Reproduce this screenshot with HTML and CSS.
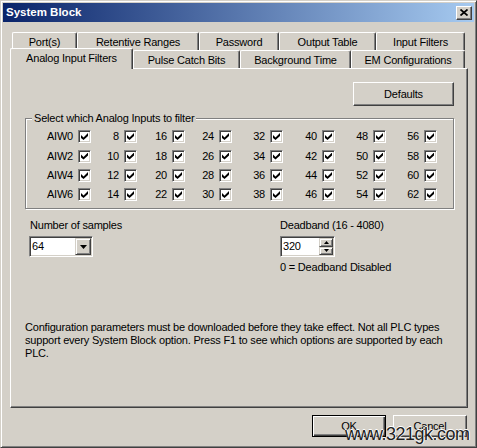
FILE: index.html
```html
<!DOCTYPE html>
<html lang="en">
  <head>
    <meta charset="UTF-8" />
    <title>System Block</title>
    <link rel="stylesheet" href="styles.css">
  </head>
  <body>
    <div class="window">
      <div class="titlebar">
        <span class="title">System Block</span>
        <span class="close">
          <svg width="8" height="7" viewBox="0 0 8 7"><path d="M0.5 0.5L7.5 6.5M7.5 0.5L0.5 6.5" stroke="#000" stroke-width="1.7" /></svg>
        </span>
      </div>

      <div class="client">
        <div class="tab-row back">
          <div class="tab tab-ports">Port(s)</div>
          <div class="tab tab-retentive">Retentive Ranges</div>
          <div class="tab tab-password">Password</div>
          <div class="tab tab-output">Output Table</div>
          <div class="tab tab-filters">Input Filters</div>
        </div>
        <div class="tab-row front">
          <div class="tab tab-analog active">Analog Input Filters</div>
          <div class="tab tab-pulse">Pulse Catch Bits</div>
          <div class="tab tab-background">Background Time</div>
          <div class="tab tab-em">EM Configurations</div>
        </div>

        <div class="panel">
          <div class="panel-head">
            <button class="btn defaults">Defaults</button>
          </div>

          <fieldset class="group">
            <legend>Select which Analog Inputs to filter</legend>
            <div class="inputs">
              <div class="cell"><span>AIW0</span><span class="chk"></span></div>
              <div class="cell"><span>8</span><span class="chk"></span></div>
              <div class="cell"><span>16</span><span class="chk"></span></div>
              <div class="cell"><span>24</span><span class="chk"></span></div>
              <div class="cell"><span>32</span><span class="chk"></span></div>
              <div class="cell"><span>40</span><span class="chk"></span></div>
              <div class="cell"><span>48</span><span class="chk"></span></div>
              <div class="cell"><span>56</span><span class="chk"></span></div>

              <div class="cell"><span>AIW2</span><span class="chk"></span></div>
              <div class="cell"><span>10</span><span class="chk"></span></div>
              <div class="cell"><span>18</span><span class="chk"></span></div>
              <div class="cell"><span>26</span><span class="chk"></span></div>
              <div class="cell"><span>34</span><span class="chk"></span></div>
              <div class="cell"><span>42</span><span class="chk"></span></div>
              <div class="cell"><span>50</span><span class="chk"></span></div>
              <div class="cell"><span>58</span><span class="chk"></span></div>

              <div class="cell"><span>AIW4</span><span class="chk"></span></div>
              <div class="cell"><span>12</span><span class="chk"></span></div>
              <div class="cell"><span>20</span><span class="chk"></span></div>
              <div class="cell"><span>28</span><span class="chk"></span></div>
              <div class="cell"><span>36</span><span class="chk"></span></div>
              <div class="cell"><span>44</span><span class="chk"></span></div>
              <div class="cell"><span>52</span><span class="chk"></span></div>
              <div class="cell"><span>60</span><span class="chk"></span></div>

              <div class="cell"><span>AIW6</span><span class="chk"></span></div>
              <div class="cell"><span>14</span><span class="chk"></span></div>
              <div class="cell"><span>22</span><span class="chk"></span></div>
              <div class="cell"><span>30</span><span class="chk"></span></div>
              <div class="cell"><span>38</span><span class="chk"></span></div>
              <div class="cell"><span>46</span><span class="chk"></span></div>
              <div class="cell"><span>54</span><span class="chk"></span></div>
              <div class="cell"><span>62</span><span class="chk"></span></div>
            </div>
          </fieldset>

          <div class="settings">
            <div class="samples">
              <p class="label">Number of samples</p>
              <div class="combo">
                <span class="combo-value">64</span>
                <span class="combo-btn">
                  <svg width="7" height="4" viewBox="0 0 7 4"><path d="M0 0H7L3.5 4Z" fill="#000" /></svg>
                </span>
              </div>
            </div>
            <div class="deadband">
              <p class="label">Deadband (16 - 4080)</p>
              <div class="spin">
                <span class="spin-value">320</span>
                <span class="spin-btns">
                  <span class="spin-btn">
                    <svg width="5" height="3" viewBox="0 0 5 3"><path d="M2.5 0L5 3H0Z" fill="#000" /></svg>
                  </span>
                  <span class="spin-btn">
                    <svg width="5" height="3" viewBox="0 0 5 3"><path d="M0 0H5L2.5 3Z" fill="#000" /></svg>
                  </span>
                </span>
              </div>
              <p class="hint">0 = Deadband Disabled</p>
            </div>
          </div>

          <p class="note">
            Configuration parameters must be downloaded before they take effect. Not all PLC types<br />
            support every System Block option. Press F1 to see which options are supported by each<br />
            PLC.
          </p>
        </div>

        <div class="actions">
          <button class="btn ok">OK</button>
          <button class="btn cancel">Cancel</button>
        </div>
      </div>

      <div class="watermark">www.321gk.com</div>
    </div>
  </body>
</html>
```

FILE: styles.css
```css
* {
  margin: 0;
  padding: 0;
  box-sizing: border-box;
}

body {
  font-family: "Liberation Sans", Arial, sans-serif;
  font-size: 11px;
  line-height: 13px;
  letter-spacing: -0.2px;
  color: #000;
  background-color: #d4d0c8;
}

.window {
  position: relative;
  width: 477px;
  height: 448px;
  display: flex;
  flex-direction: column;
  padding: 2px;
  background-color: #d4d0c8;
  border: 1px solid;
  border-color: #d4d0c8 #404040 #404040 #d4d0c8;
  box-shadow: inset 1px 1px #fff, inset -1px -1px #808080;
}

/* title bar */
.titlebar {
  height: 19px;
  display: flex;
  align-items: center;
  justify-content: space-between;
  padding: 0 2px 0 3px;
  background: linear-gradient(to right, #0a246a, #a6caf0);
}

.title {
  color: #fff;
  font-weight: bold;
  font-size: 11.5px;
  letter-spacing: 0;
}

.close {
  width: 16px;
  height: 14px;
  display: flex;
  align-items: center;
  justify-content: center;
  background-color: #d4d0c8;
  border: 1px solid;
  border-color: #fff #404040 #404040 #fff;
  box-shadow: inset -1px -1px #808080;
}

.client {
  flex: 1;
  display: flex;
  flex-direction: column;
  padding: 10px 6px 0 7px;
}

/* tabs */
.tab-row {
  display: flex;
  height: 18px;
}

.tab-row.back {
  padding-left: 2px;
}

.tab-row.front {
  align-items: flex-end;
}

.tab {
  height: 18px;
  padding-top: 3px;
  text-align: center;
  white-space: nowrap;
  background-color: #d4d0c8;
  border-top: 1px solid #fff;
  border-left: 1px solid #fff;
  border-right: 1px solid #404040;
  border-radius: 2px 2px 0 0;
  box-shadow: inset -1px 0 #808080;
}

.tab.active {
  height: 21px;
  margin-bottom: -1px;
  position: relative;
  z-index: 1;
}

.tab-ports { width: 65px; }
.tab-retentive { width: 122px; }
.tab-password { width: 80px; }
.tab-output { width: 97px; }
.tab-filters { width: 89px; }
.tab-analog { width: 123px; }
.tab-pulse { width: 107px; }
.tab-background { width: 111px; }
.tab-em { width: 114px; }

.panel {
  height: 340px;
  display: flex;
  flex-direction: column;
  padding: 13px 13px 0 14px;
  border: 1px solid;
  border-color: #fff #404040 #404040 #fff;
  box-shadow: inset -1px -1px #808080;
}

.panel-head {
  display: flex;
  justify-content: flex-end;
}

/* buttons */
.btn {
  font: inherit;
  letter-spacing: inherit;
  color: #000;
  background-color: #d4d0c8;
  border: 1px solid;
  border-color: #fff #404040 #404040 #fff;
  box-shadow: inset -1px -1px #808080;
}

.defaults {
  width: 101px;
  height: 24px;
}

.ok,
.cancel {
  width: 74px;
  height: 22px;
}

.ok {
  border-color: #000;
  box-shadow: inset 1px 1px #fff, inset -1px -1px #404040, inset -2px -2px #808080;
}

/* group box */
.group {
  margin-top: 6px;
  padding: 2px 0 4px;
  border: 1px solid #808080;
  box-shadow: inset 1px 1px #fff, 1px 1px #fff;
}

.group legend {
  margin-left: 6px;
  padding: 0 2px;
  background-color: #d4d0c8;
}

.inputs {
  display: grid;
  grid-template-columns: 65px 46px 48px 47px 51px 52px 51px 51px;
  grid-template-rows: 19px 20px 19px 19px;
}

.cell {
  display: flex;
  align-items: center;
  justify-content: flex-end;
  gap: 5px;
}

.chk {
  width: 13px;
  height: 13px;
  display: flex;
  align-items: center;
  justify-content: center;
  background-color: #fff;
  border: 1px solid;
  border-color: #808080 #fff #fff #808080;
  box-shadow: inset 1px 1px #404040, inset -1px -1px #d4d0c8;
}

.chk::after {
  content: "";
  width: 7px;
  height: 7px;
  background-color: #000;
  clip-path: polygon(0 29%, 36% 64%, 100% 0, 100% 43%, 36% 100%, 0 71%);
}

/* samples + deadband */
.settings {
  display: flex;
  margin-top: 10px;
}

.samples {
  width: 251px;
  margin-left: 4px;
}

.samples .label {
  padding-left: 1px;
}

.combo,
.spin {
  height: 21px;
  margin-top: 4px;
  display: flex;
  padding: 1px;
  background-color: #fff;
  border: 1px solid;
  border-color: #808080 #fff #fff #808080;
  box-shadow: inset 1px 1px #404040, inset -1px -1px #d4d0c8;
}

.combo {
  width: 64px;
}

.combo-value,
.spin-value {
  flex: 1;
  align-self: center;
  padding-left: 1px;
}

.combo-btn,
.spin-btn {
  display: flex;
  align-items: center;
  justify-content: center;
  background-color: #d4d0c8;
  border: 1px solid;
  border-color: #d4d0c8 #404040 #404040 #d4d0c8;
  box-shadow: inset 1px 1px #fff, inset -1px -1px #808080;
}

.combo-btn {
  width: 16px;
}

.spin {
  width: 55px;
}

.spin-btns {
  width: 14px;
  display: flex;
  flex-direction: column;
}

.spin-btn {
  flex: 1;
}

.hint {
  margin-top: 4px;
}

.note {
  margin-top: 47px;
}

.actions {
  display: flex;
  justify-content: flex-end;
  gap: 7px;
  margin-top: 7px;
  padding-right: 1px;
}

.watermark {
  position: absolute;
  left: 344px;
  top: 424px;
  font-size: 18px;
  line-height: 18px;
  letter-spacing: -0.5px;
  color: #1e1e1e;
  text-shadow: 0 -1px 0 #fff, 1px 0 0 #fff;
}
```
